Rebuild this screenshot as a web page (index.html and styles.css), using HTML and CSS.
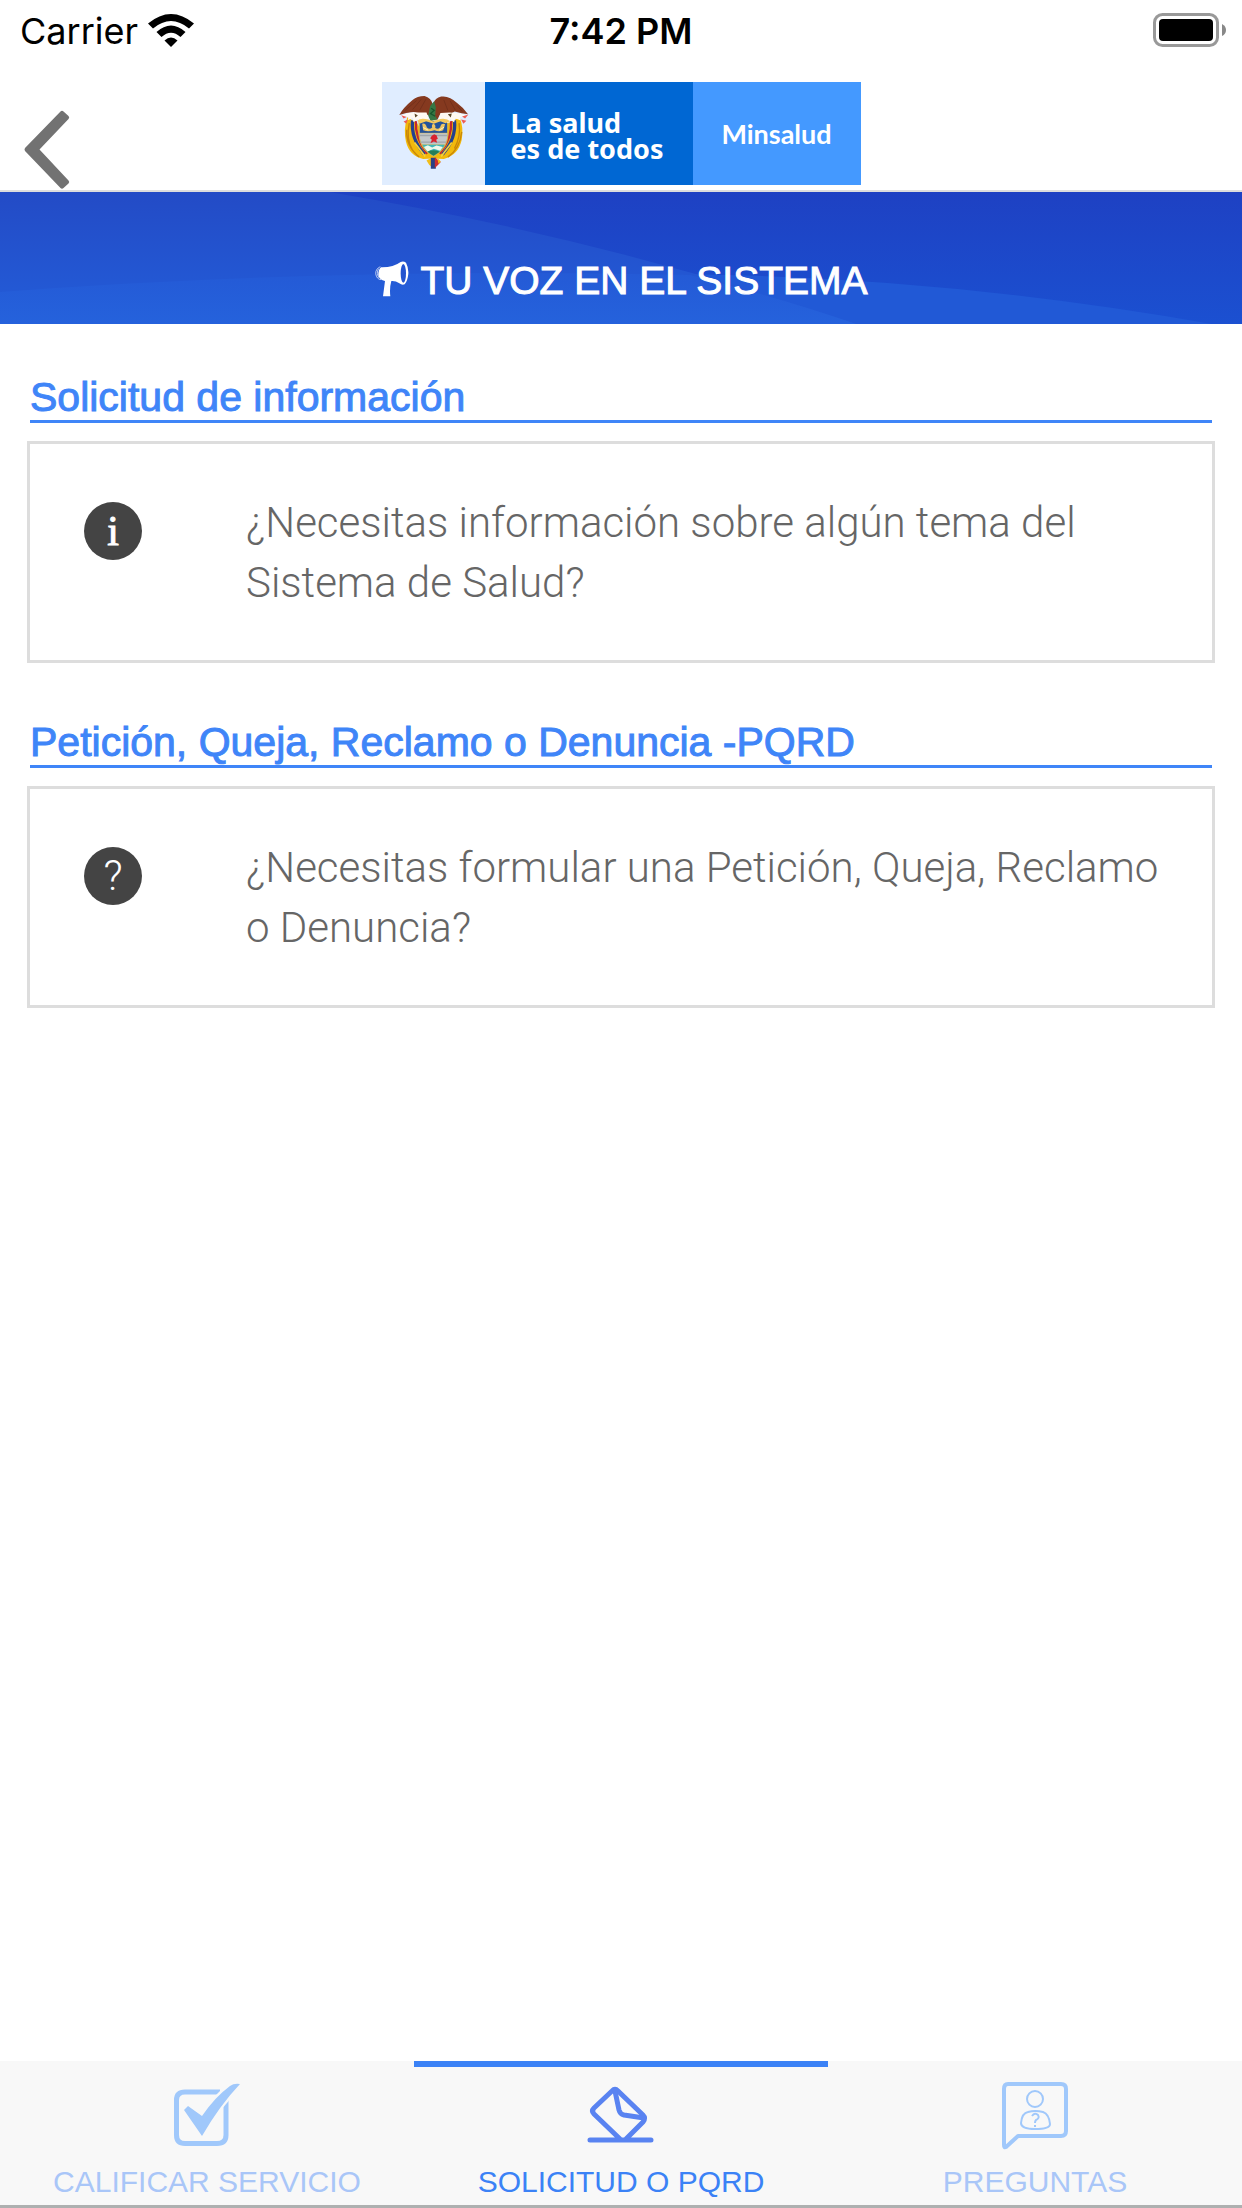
FILE: index.html
```html
<!DOCTYPE html>
<html lang="es">
<head>
    <meta charset="UTF-8">
    <meta name="viewport" content="width=device-width, initial-scale=1.0">
    <title>Tu voz en el sistema</title>
    <link rel="stylesheet" href="styles.css">
</head>
<body>
    <div class="status-bar">
        <div class="carrier">
            <span>Carrier</span>
            <svg class="wifi" viewBox="0 0 46 34" aria-hidden="true">
                <path d="M0 9.500Q23 -9.500 46 9.500L41 14.500Q23 -.5 5 14.500Z"/>
                <path d="M8.500 18Q23 5 37.500 18L32.500 23Q23 14.500 13.500 23Z"/>
                <path d="M16.500 26.500Q23 20.500 29.500 26.500L23 33Z"/>
            </svg>
        </div>
        <span class="time">7:42 PM</span>
        <svg class="battery" viewBox="0 0 74 36" aria-hidden="true">
            <rect x="1.500" y="1.500" width="63" height="31" rx="8" fill="none" stroke="#999" stroke-width="3"/>
            <rect x="6" y="6" width="54" height="22" rx="4"/>
            <path d="M69 11Q73 13 73 17T69 23Z" fill="#888"/>
        </svg>
    </div>
    <header>
        <button class="back-btn" aria-label="Volver">
            <svg viewBox="0 0 46 80" aria-hidden="true">
                <path d="M36.500 1.500Q38 0 39.500 1.500L44.500 6Q46 7.500 44.500 9L15.500 39.500L44.500 70.500Q46 72 44.500 73.500L39.500 78Q38 79.500 36.500 78L1 41Q0 39.500 1 38Z" fill="#727272"/>
            </svg>
        </button>
        <div class="logo">
            <div class="logo-shield">
                <svg viewBox="6 6 310 310" aria-hidden="true">
                    <!-- flags -->
                    <path d="M82 112Q70 150 78 185Q88 228 130 238L160 236L192 238Q236 226 246 180Q252 142 240 112L205 130L160 225L112 130Z" fill="#f2b90c"/>
                    <path d="M88 130Q78 178 98 212M80 150Q78 200 118 232M238 130Q244 170 224 206M246 156Q240 208 204 232" fill="none" stroke="#c98708" stroke-width="4"/>
                    <path d="M98 122Q92 176 134 224M224 122Q230 176 188 224" fill="none" stroke="#23418f" stroke-width="10"/>
                    <path d="M108 124Q104 172 142 222M214 124Q218 172 180 222" fill="none" stroke="#c3272f" stroke-width="7"/>
                    <path d="M104 188L136 230M216 188L184 230" stroke="#f6d23b" stroke-width="5"/>
                    <!-- shield -->
                    <path d="M116 122H206V165Q204 208 161 232Q118 208 116 165Z" fill="#ddb53c"/>
                    <path d="M120 124H202V159H120Z" fill="#23529b"/>
                    <path d="M119 160H203Q203 180 196 194H126Q119 180 119 160Z" fill="#c3c7c9"/>
                    <path d="M119 167H203M121 187H200" stroke="#a0a6aa" stroke-width="4"/>
                    <path d="M127 195H195Q184 216 161 228Q138 216 127 195Z" fill="#3fb7b7"/>
                    <path d="M132 202L144 196L157 203L170 197L189 202L181 213L162 207L143 215Z" fill="#eff8e9"/>
                    <path d="M143 216Q160 207 180 216L161 228Z" fill="#267e58"/>
                    <path d="M127 132Q137 128 141 143Q149 151 157 143Q154 135 161 132Q169 136 166 144Q174 150 181 142Q184 128 196 133L190 151Q178 157 164 151Q145 158 130 151Z" fill="#eec463"/>
                    <path d="M130 143L145 151M193 142L178 151" stroke="#fff4be" stroke-width="3"/>
                    <path d="M156 168L163 163L170 166L174 177L169 180L172 189L162 185L152 190L156 180L151 175Z" fill="#d9232f"/>
                    <!-- condor -->
                    <path d="M58 105Q70 83 98 60Q112 48 134 48Q154 54 159 73Q166 54 184 50Q208 46 233 70Q252 84 265 103Q246 101 225 95L207 104L182 101L173 119L153 121L146 105L119 102L101 96Q78 98 58 105Z" fill="#85391f"/>
                    <path d="M76 91L110 62M98 89L124 58M120 90L138 58M192 60L204 91M211 63L227 91M231 76L248 95" stroke="#6b2c18" stroke-width="2"/>
                    <path d="M65 107Q90 95 116 98L140 98L147 119L126 119L120 130L112 117L101 127L98 114L83 121L86 112ZM182 99L209 98Q237 98 262 106L241 112L243 122L226 115L223 128L212 117L204 130L196 120L177 119Z" fill="#fffaf3"/>
                    <path d="M151 78L163 64L168 82L166 108L173 118L152 123L145 107Z" fill="#367744"/>
                    <path d="M154 85L163 91L152 101L166 109" fill="none" stroke="#18552c" stroke-width="4"/>
                    <path d="M112 123Q122 112 145 119L160 125L181 117Q202 114 211 124L197 130L182 124L162 132L139 124L121 131Z" fill="#f6c95d"/>
                    <path d="M104 101L114 107L106 113ZM204 103L216 101L213 113Z" fill="#5d482a"/>
                    <!-- spear tips and lower knot -->
                    <path d="M64 106L80 111L71 116ZM71 125L84 119L79 132ZM266 104L247 110L256 116ZM260 123L244 119L251 132Z" fill="#ef5d54"/>
                    <path d="M140 242L156 233L158 264L148 255Z" fill="#f1bd19"/>
                    <path d="M153 234H169L168 267H153Z" fill="#284184"/>
                    <path d="M165 233L183 247L173 257L165 265Z" fill="#cd2f2e"/>
                    <path d="M172 234L183 245L176 252Z" fill="#f1bd19"/>
                </svg>
            </div>
            <div class="logo-slogan">La salud<br>es de todos</div>
            <div class="logo-ministry">Minsalud</div>
        </div>
    </header>
    <div class="banner">
        <svg class="banner-bg" viewBox="0 0 1242 132" preserveAspectRatio="none" aria-hidden="true">
            <defs>
                <linearGradient id="base" x1="0" y1="0" x2="0" y2="1">
                    <stop offset="0" stop-color="#1e41c3"/>
                    <stop offset="1" stop-color="#1b50d1"/>
                </linearGradient>
                <linearGradient id="left" x1="0" y1="0" x2="0" y2="1">
                    <stop offset="0" stop-color="#234bc6"/>
                    <stop offset="1" stop-color="#235dd9"/>
                </linearGradient>
                <linearGradient id="arc" x1="0" y1="0" x2="0" y2="1">
                    <stop offset="0" stop-color="#245ad6"/>
                    <stop offset="1" stop-color="#2562dc"/>
                </linearGradient>
            </defs>
            <rect width="1242" height="132" fill="url(#base)"/>
            <path d="M650 82Q930 82 1212 132H650Z" fill="#2159d6"/>
            <path d="M0 0H329Q600 45 856 132H0Z" fill="url(#left)"/>
            <path d="M0 100Q330 75 690 83Q780 106 856 132H0Z" fill="url(#arc)"/>
        </svg>
        <svg class="megaphone" viewBox="66 64 102 108" aria-hidden="true">
            <path d="M84 83Q120 84 143 67Q151 63 159 69Q167 84 166 102Q164 123 155 134Q147 137 139 131Q128 123 115 124Q109 145 112 170H90L96 124Q80 122 76 107Q76 89 84 83Z" fill="#fff"/>
            <path d="M82 81Q68 87 68 102Q71 119 84 120M77 87Q68 101 79 115" fill="none" stroke="#fff" stroke-width="2"/>
            <ellipse cx="151" cy="101" rx="8" ry="28" fill="#2354d0"/>
        </svg>
        <h1>TU VOZ EN EL SISTEMA</h1>
    </div>
    <main>
        <section>
            <h2>Solicitud de información</h2>
            <button class="card">
                <span class="card-icon info">i</span>
                <span class="card-text">¿Necesitas información sobre algún tema del Sistema de Salud?</span>
            </button>
        </section>
        <section>
            <h2>Petición, Queja, Reclamo o Denuncia -PQRD</h2>
            <button class="card">
                <span class="card-icon">?</span>
                <span class="card-text">¿Necesitas formular una Petición, Queja, Reclamo o Denuncia?</span>
            </button>
        </section>
    </main>
    <nav class="tabs">
        <a class="tab" href="#calificar">
            <svg viewBox="0 0 70 70" aria-hidden="true">
                <path d="M48 11H13Q4.500 11 4.500 19V54Q4.500 62.500 13 62.500H45Q54 62.500 54 54V19" fill="none" stroke="#a0c8fb" stroke-width="5"/>
                <path d="M43 15L56 2L65 10L49 29Z" fill="#f8f8f8"/>
                <path d="M12 29L16 25L30 35Q43 16 58 5Q62 2 68 3Q48 24 30 55Z" fill="#a0c8fb"/>
            </svg>
            <span>CALIFICAR SERVICIO</span>
        </a>
        <a class="tab active" href="#solicitud">
            <svg viewBox="0 0 70 70" aria-hidden="true" fill="none" stroke="#5983f1" stroke-width="5" stroke-linecap="round" stroke-linejoin="round">
                <path d="M4 59H65M34 58L8 33Q5 30 8 27L26 10Q29 7 32 10L57 34Q60 37 57 41L40 58"/>
                <path d="M29 10L33 29Q34 33 38 34L58 37"/>
            </svg>
            <span>SOLICITUD O PQRD</span>
        </a>
        <a class="tab" href="#preguntas">
            <svg viewBox="0 0 70 70" aria-hidden="true" fill="none" stroke="#a0c8fb">
                <path d="M8 3H61Q66 3 66 8V50Q66 55 61 55H18L6 66Q4 67 4 64V8Q4 3 8 3Z" stroke-width="4" stroke-linejoin="round"/>
                <circle cx="35" cy="18" r="8" stroke-width="2"/>
                <path d="M28 31Q35 29 43 31Q49 33 50 43Q50 48 35 48Q21 48 21 42Q22 32 28 31Z" stroke-width="2"/>
                <path d="M32 35Q35 31 38 34Q40 37 36 39Q35 40 35 42M35 44V46" stroke-width="2"/>
            </svg>
            <span>PREGUNTAS</span>
        </a>
    </nav>
</body>
</html>
```
FILE: styles.css
```css
* {
    box-sizing: border-box;
}

body {
    font-family: "Liberation Sans", Arial, sans-serif;
    margin: 0;
    min-height: 100vh;
    display: flex;
    flex-direction: column;
    background-color: #fff;
}

button {
    padding: 0;
    background: none;
    border: none;
    cursor: pointer;
}

svg {
    display: block;
    flex-shrink: 0;
}

.status-bar {
    display: grid;
    grid-template-columns: 1fr auto 1fr;
    align-items: center;
    height: 62px;
    padding: 0 15px;
    font-family: Inter, sans-serif;
    font-size: 36px;
    color: #000;
}

.carrier {
    display: flex;
    align-items: center;
    gap: 10px;
    padding-left: 5px;
}

.wifi {
    width: 46px;
    height: 34px;
}

.time {
    font-weight: 600;
}

.battery {
    width: 74px;
    height: 36px;
    justify-self: end;
}

header {
    display: grid;
    grid-template-columns: 1fr auto 1fr;
    height: 130px;
    padding: 0 24px;
    border-bottom: 2px solid #ddd;
}

.back-btn {
    align-self: end;
    justify-self: start;
}

.back-btn svg {
    width: 46px;
    height: 80px;
}

.logo {
    display: flex;
    height: 103px;
    margin-top: 20px;
    color: #fff;
}

.logo div {
    display: flex;
    align-items: center;
}

.logo-shield {
    background-color: #e0edff;
}

.logo-shield svg {
    width: 103px;
    height: 103px;
}

.logo .logo-slogan {
    display: block;
    width: 208px;
    padding: 28px 0 0 26px;
    background-color: #0067d3;
    font-family: "Noto Sans", sans-serif;
    font-size: 27px;
    font-weight: 700;
    line-height: 26px;
}

.logo .logo-ministry {
    justify-content: center;
    width: 168px;
    background-color: #4499ff;
    font-family: Lato, sans-serif;
    font-size: 27px;
    font-weight: 700;
}

.banner {
    position: relative;
    display: flex;
    justify-content: center;
    align-items: flex-end;
    gap: 10px;
    height: 132px;
    padding-bottom: 19px;
    background-color: #1e4bcb;
    color: #fff;
}

.banner-bg {
    position: absolute;
    top: 0;
    left: 0;
    width: 100%;
    height: 100%;
}

.megaphone {
    position: relative;
    width: 36px;
    height: 36px;
    margin-bottom: 8px;
}

h1 {
    position: relative;
    margin: 0;
    font-size: 39px;
    font-weight: 400;
    line-height: 48px;
    -webkit-text-stroke: 1px #fff;
}

main {
    flex: 1;
    padding: 50px 27px;
}

section {
    margin-bottom: 56px;
}

h2 {
    margin: 0 3px 18px;
    border-bottom: 3px solid #3f85f8;
    color: #3f85f8;
    font-size: 41px;
    font-weight: 400;
    line-height: 46px;
    -webkit-text-stroke: 1px #3f85f8;
}

.card {
    display: flex;
    align-items: flex-start;
    gap: 104px;
    width: 100%;
    padding: 49px 48px 47px 54px;
    border: 3px solid #ddd;
    text-align: left;
}

.card-icon {
    flex-shrink: 0;
    width: 58px;
    height: 58px;
    margin-top: 9px;
    border-radius: 50%;
    background-color: #444;
    color: #fff;
    font-family: Roboto, sans-serif;
    font-size: 42px;
    font-weight: 300;
    line-height: 58px;
    text-align: center;
}

.info {
    font-family: "Liberation Serif", serif;
    font-weight: 400;
    -webkit-text-stroke: 1px #fff;
}

.card-text {
    color: #666;
    font-family: Roboto, sans-serif;
    font-size: 42px;
    font-weight: 300;
    line-height: 60px;
}

.tabs {
    display: grid;
    grid-template-columns: repeat(3, 1fr);
    background-color: #f8f8f8;
    border-bottom: 3px solid #aeb0b0;
}

.tab {
    display: flex;
    flex-direction: column;
    align-items: center;
    gap: 13px;
    height: 144px;
    padding-top: 14px;
    border-top: 6px solid transparent;
    color: #a9c6f8;
    font-size: 30px;
    line-height: 36px;
    text-decoration: none;
}

.tab svg {
    width: 70px;
    height: 70px;
}

.active {
    border-top-color: #3b82f6;
    color: #3b82f6;
}
```
